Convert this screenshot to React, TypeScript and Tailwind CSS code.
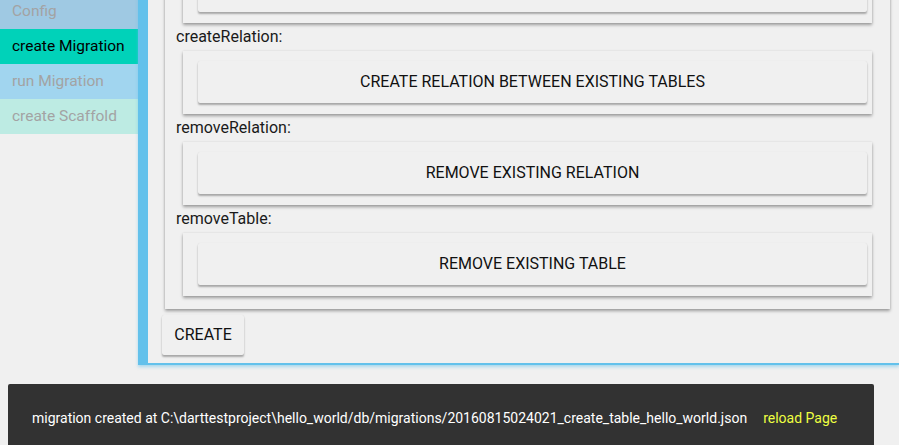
import React from 'react';

const navItems = [
  { label: 'Config', bg: 'bg-[#9fc9e3]', active: false },
  { label: 'create Migration', bg: 'bg-[#00d2b9]', active: true },
  { label: 'run Migration', bg: 'bg-[#a1d5ef]', active: false },
  { label: 'create Scaffold', bg: 'bg-[#bdebe3]', active: false },
];

const sections = [
  { name: 'createTable:', action: 'CREATE NEW TABLE' },
  { name: 'createRelation:', action: 'CREATE RELATION BETWEEN EXISTING TABLES' },
  { name: 'removeRelation:', action: 'REMOVE EXISTING RELATION' },
  { name: 'removeTable:', action: 'REMOVE EXISTING TABLE' },
];

function Section({ name, action }: { name: string; action: string }) {
  return (
    <div>
      <div className="h-[28px] flex items-center pl-[11px] text-[16px] text-[#1a1a1a]">{name}</div>
      <div className="mx-[18px] bg-[#f0f0f0] pt-[10px] pb-[11px] pl-[15px] pr-[5px] shadow-[0_2px_3px_rgba(0,0,0,0.35),0_0_2px_rgba(0,0,0,0.08)]">
        <button className="w-full h-[42px] rounded-[2px] bg-[#f0f0f0] text-[16px] text-[#111] shadow-[0_2px_2px_rgba(0,0,0,0.3),0_0_1px_rgba(0,0,0,0.1)]">
          {action}
        </button>
      </div>
    </div>
  );
}

export default function App() {
  return (
    <div className="relative w-[899px] h-[445px] overflow-hidden bg-[#f0f0f0] font-['Roboto',sans-serif]">
      <div className="flex items-start">
        {/* Sidebar */}
        <div className="w-[138px] mt-[-6px] shrink-0">
          {navItems.map((item) => (
            <div
              key={item.label}
              className={`h-[35px] flex items-center pl-[12px] text-[15.5px] ${item.bg} ${item.active ? 'text-black' : 'text-[#a3a3a3]'}`}
            >
              {item.label}
            </div>
          ))}
        </div>

        {/* Main */}
        <div className="flex-1 mt-[-76px] border-l-[10px] border-b-[2px] border-[#63c1eb] shadow-[0_2px_3px_rgba(99,193,235,0.5)] pl-[17px] pr-[9px] pb-[8px]">
          <div className="bg-[#f0f0f0] pt-[8px] pb-[13px] shadow-[0_2px_3px_rgba(0,0,0,0.35),0_0_2px_rgba(0,0,0,0.08)]">
            {sections.map((s) => (
              <Section key={s.name} name={s.name} action={s.action} />
            ))}
          </div>
          <button className="mt-[6px] ml-[-3px] w-[82px] h-[40px] rounded-[2px] bg-[#f0f0f0] text-[16px] text-[#111] shadow-[0_2px_2px_rgba(0,0,0,0.3),0_0_1px_rgba(0,0,0,0.1)]">
            CREATE
          </button>
        </div>
      </div>

      {/* Snackbar */}
      <div className="absolute left-[8px] top-[384px] w-[866px] h-[90px] rounded-[2px] bg-[#323232] flex items-start px-[24px] pt-[24px] text-[14px] leading-[20px]">
        <span className="text-white">
          migration created at C:\darttestproject\hello_world/db/migrations/20160815024021_create_table_hello_world.json
        </span>
        <span className="ml-[16px] text-[#eeff41]">reload Page</span>
      </div>
    </div>
  );
}
